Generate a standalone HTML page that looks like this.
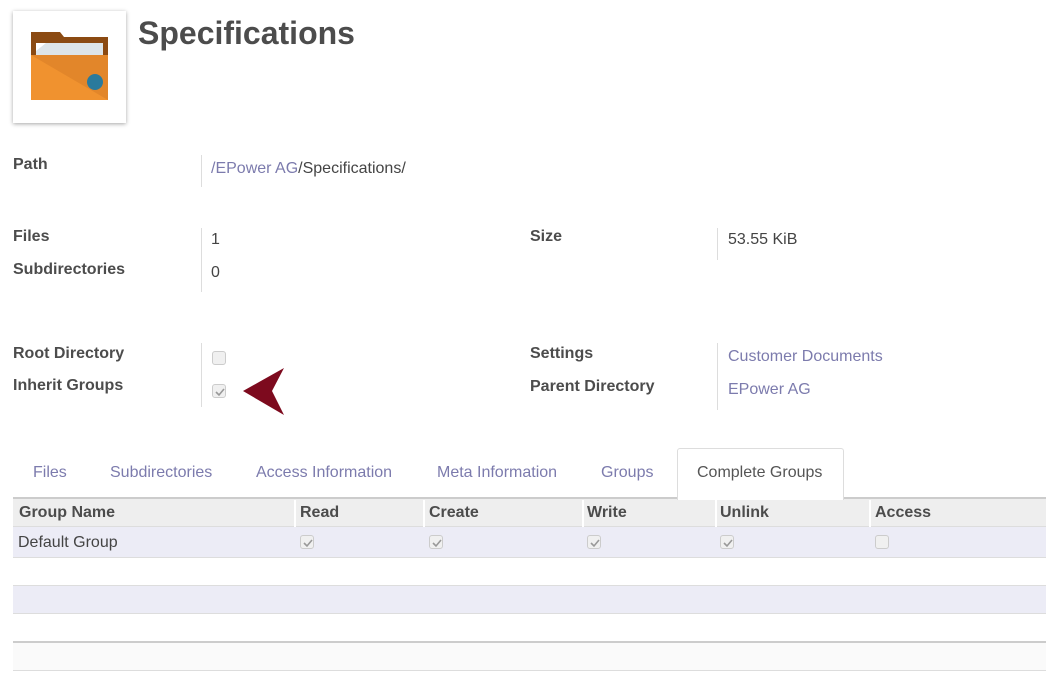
<!DOCTYPE html>
<html><head><style>
*{margin:0;padding:0;box-sizing:border-box}
body{width:1056px;height:684px;background:#fff;position:relative;overflow:hidden;font-family:"Liberation Sans",sans-serif;font-size:16px;color:#444}
.a{position:absolute;white-space:nowrap;line-height:20px}
.l{font-weight:bold;color:#4c4c4c}
.lk{color:#7c7bad}
.v{position:absolute;width:1px;background:#ddd}
.cb{position:absolute;width:14px;height:14px;border:1px solid #ccc;border-radius:3px;background:#f0f0f0}
.cb svg{position:absolute;left:1px;top:1px}
.th{position:absolute;top:500px;font-weight:bold;color:#4c4c4c;line-height:26px}
.cs{position:absolute;top:500px;width:2px;height:27px;background:#fff}
</style></head><body>
<div style="position:absolute;left:13px;top:11px;width:113px;height:112px;background:#fff;box-shadow:0 1px 4px rgba(0,0,0,.35)"></div>
<svg style="position:absolute;left:31px;top:32px" width="78" height="70" viewBox="0 0 78 70">
<path d="M0 0H29L33 5H77V68H0Z" fill="#8b4a12"/>
<rect x="5" y="11" width="67" height="12" fill="#dde4e8"/>
<path d="M5 11H15L5 19Z" fill="#fff"/>
<rect x="0" y="23" width="77" height="45" fill="#f0922f"/>
<path d="M0 23H77V68Z" fill="#e2862a"/>
<circle cx="64" cy="50" r="8" fill="#2a7a9c"/>
</svg>
<div class="a" style="left:138px;top:15px;font-size:32px;line-height:36px;font-weight:bold;color:#4c4c4c">Specifications</div>

<div class="a l" style="left:13px;top:155px">Path</div>
<div class="v" style="left:201px;top:155px;height:32px"></div>
<div class="a" style="left:211px;top:159px"><span class="lk">/EPower AG</span>/Specifications/</div>

<div class="a l" style="left:13px;top:227px">Files</div>
<div class="a l" style="left:13px;top:260px">Subdirectories</div>
<div class="v" style="left:201px;top:228px;height:64px"></div>
<div class="a" style="left:211px;top:230px">1</div>
<div class="a" style="left:211px;top:263px">0</div>
<div class="a l" style="left:530px;top:227px">Size</div>
<div class="v" style="left:717px;top:228px;height:32px"></div>
<div class="a" style="left:728px;top:230px">53.55 KiB</div>

<div class="a l" style="left:13px;top:344px">Root Directory</div>
<div class="a l" style="left:13px;top:376px">Inherit Groups</div>
<div class="v" style="left:201px;top:343px;height:64px"></div>
<div class="cb" style="left:212px;top:351px"></div>
<div class="cb" style="left:212px;top:384px"><svg width="12" height="12"><path d="M2 6L5 9L10 3" stroke="#999" stroke-width="1.6" fill="none"/></svg></div>
<svg style="position:absolute;left:242px;top:367px" width="44" height="50"><path d="M1 24L42 1L30 24L42 48Z" fill="#7d0a1e"/></svg>
<div class="a l" style="left:530px;top:344px">Settings</div>
<div class="a l" style="left:530px;top:377px">Parent Directory</div>
<div class="v" style="left:717px;top:343px;height:67px"></div>
<div class="a lk" style="left:728px;top:347px">Customer Documents</div>
<div class="a lk" style="left:728px;top:380px">EPower AG</div>

<div class="a lk" style="left:33px;top:463px">Files</div>
<div class="a lk" style="left:110px;top:463px">Subdirectories</div>
<div class="a lk" style="left:256px;top:463px">Access Information</div>
<div class="a lk" style="left:437px;top:463px">Meta Information</div>
<div class="a lk" style="left:601px;top:463px">Groups</div>
<div style="position:absolute;left:677px;top:448px;width:167px;height:52px;border:1px solid #ddd;border-bottom:none;border-radius:3px 3px 0 0;background:#fff;z-index:2"></div>
<div class="a" style="left:697px;top:463px;z-index:3;color:#555">Complete Groups</div>

<div style="position:absolute;left:13px;top:497px;width:1033px;height:30px;background:#eee;border-top:2px solid #ccc;border-bottom:1px solid #ddd"></div>
<div class="cs" style="left:294px"></div><div class="cs" style="left:423px"></div><div class="cs" style="left:582px"></div><div class="cs" style="left:715px"></div><div class="cs" style="left:869px"></div>
<div class="th" style="left:19px">Group Name</div>
<div class="th" style="left:300px">Read</div>
<div class="th" style="left:429px">Create</div>
<div class="th" style="left:587px">Write</div>
<div class="th" style="left:720px">Unlink</div>
<div class="th" style="left:875px">Access</div>
<div style="position:absolute;left:13px;top:527px;width:1033px;height:31px;background:#ececf6;border-bottom:1px solid #ddd"></div>
<div class="a" style="left:18px;top:533px">Default Group</div>
<div class="cb" style="left:300px;top:535px"><svg width="12" height="12"><path d="M2 6L5 9L10 3" stroke="#999" stroke-width="1.6" fill="none"/></svg></div>
<div class="cb" style="left:429px;top:535px"><svg width="12" height="12"><path d="M2 6L5 9L10 3" stroke="#999" stroke-width="1.6" fill="none"/></svg></div>
<div class="cb" style="left:587px;top:535px"><svg width="12" height="12"><path d="M2 6L5 9L10 3" stroke="#999" stroke-width="1.6" fill="none"/></svg></div>
<div class="cb" style="left:720px;top:535px"><svg width="12" height="12"><path d="M2 6L5 9L10 3" stroke="#999" stroke-width="1.6" fill="none"/></svg></div>
<div class="cb" style="left:875px;top:535px"></div>
<div style="position:absolute;left:13px;top:585px;width:1033px;height:29px;background:#ececf6;border-top:1px solid #ddd;border-bottom:1px solid #ddd"></div>
<div style="position:absolute;left:13px;top:641px;width:1033px;height:30px;background:#fafafa;border-top:2px solid #ccc;border-bottom:1px solid #ddd"></div>
</body></html>
